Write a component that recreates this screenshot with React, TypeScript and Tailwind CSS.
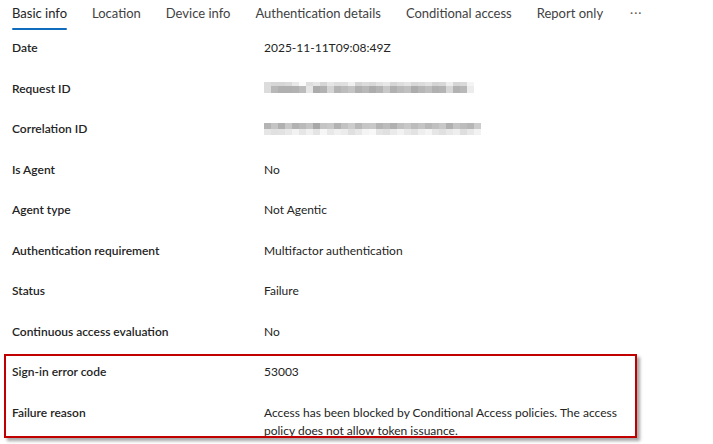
import React from "react";

const reqTop = ["bg-[#dcdcdc]","bg-[#d6d6d6]","bg-[#d6d6d6]","bg-[#dadada]","bg-[#e8e8e8]","bg-[#fbfbfb]","bg-[#dedede]","bg-[#e6e6e6]","bg-[#d6d6d6]","bg-[#e6e6e6]","bg-[#dedede]","bg-[#e0e0e0]","bg-[#f0f0f0]","bg-[#d4d4d4]","bg-[#dcdcdc]","bg-[#d8d8d8]","bg-[#e2e2e2]","bg-[#e8e8e8]","bg-[#d6d6d6]","bg-[#dedede]","bg-[#e4e4e4]","bg-[#d8d8d8]","bg-[#dcdcdc]","bg-[#e2e2e2]","bg-[#d4d4d4]","bg-[#d8d8d8]","bg-[#eeeeee]","bg-[#d6d6d6]","bg-[#dadada]","bg-[#f4f4f4]"];
const reqBot = ["bg-[#dcdcdc]","bg-[#b8b8b8]","bg-[#b0b0b0]","bg-[#b0b0b0]","bg-[#b2b2b2]","bg-[#bcbcbc]","bg-[#e6e6e6]","bg-[#acacac]","bg-[#b2b2b2]","bg-[#d4d4d4]","bg-[#b4b4b4]","bg-[#bcbcbc]","bg-[#c4c4c4]","bg-[#b0b0b0]","bg-[#b8b8b8]","bg-[#acacac]","bg-[#b4b4b4]","bg-[#c8c8c8]","bg-[#b0b0b0]","bg-[#bababa]","bg-[#c0c0c0]","bg-[#acacac]","bg-[#b6b6b6]","bg-[#bebebe]","bg-[#b0b0b0]","bg-[#b4b4b4]","bg-[#d6d6d6]","bg-[#b2b2b2]","bg-[#b8b8b8]","bg-[#ececec]"];
const corTop = ["bg-[#b4b4b4]","bg-[#c4c4c4]","bg-[#b0b0b0]","bg-[#c8c8c8]","bg-[#b2b2b2]","bg-[#bababa]","bg-[#c4c4c4]","bg-[#a8a8a8]","bg-[#c4c4c4]","bg-[#c8c8c8]","bg-[#b2b2b2]","bg-[#c2c2c2]","bg-[#cccccc]","bg-[#b8b8b8]","bg-[#c6c6c6]","bg-[#c8c8c8]","bg-[#b4b4b4]","bg-[#bcbcbc]","bg-[#b0b0b0]","bg-[#c0c0c0]","bg-[#c8c8c8]","bg-[#bcbcbc]","bg-[#c4c4c4]","bg-[#b8b8b8]","bg-[#c0c0c0]","bg-[#c8c8c8]","bg-[#b0b0b0]","bg-[#c4c4c4]","bg-[#bcbcbc]","bg-[#b6b6b6]","bg-[#cccccc]"];
const corBot = ["bg-[#e6e6e6]","bg-[#e0e0e0]","bg-[#e2e2e2]","bg-[#e8e8e8]","bg-[#f2f2f2]","bg-[#e6e6e6]","bg-[#f0f0f0]","bg-[#e4e4e4]","bg-[#f6f6f6]","bg-[#e8e8e8]","bg-[#f0f0f0]","bg-[#ececec]","bg-[#e0e0e0]","bg-[#e8e8e8]","bg-[#f4f4f4]","bg-[#f8f8f8]","bg-[#e4e4e4]","bg-[#e0e0e0]","bg-[#eaeaea]","bg-[#f2f2f2]","bg-[#e8e8e8]","bg-[#e2e2e2]","bg-[#eeeeee]","bg-[#f4f4f4]","bg-[#e6e6e6]","bg-[#e0e0e0]","bg-[#e8e8e8]","bg-[#eeeeee]","bg-[#dedede]","bg-[#e8e8e8]","bg-[#f2f2f2]"];

function Blur({ top, bot, topH, botH, mt }: { top: string[]; bot: string[]; topH: string; botH: string; mt: string }) {
  return (
    <div className={`flex flex-col ${mt}`}>
      <div className="flex">
        {top.map((c, i) => (
          <div key={i} className={`w-[7px] ${topH} ${c}`} />
        ))}
      </div>
      <div className="flex">
        {bot.map((c, i) => (
          <div key={i} className={`w-[7px] ${botH} ${c}`} />
        ))}
      </div>
    </div>
  );
}

const tabs = ["Basic info", "Location", "Device info", "Authentication details", "Conditional access", "Report only"];

type Row = { label: string; value: React.ReactNode };

const rows: Row[] = [
  { label: "Date", value: "2025-11-11T09:08:49Z" },
  { label: "Request ID", value: <Blur top={reqTop} bot={reqBot} topH="h-[4px]" botH="h-[7px]" mt="mt-[2px]" /> },
  { label: "Correlation ID", value: <Blur top={corTop} bot={corBot} topH="h-[6px]" botH="h-[6px]" mt="mt-[3px]" /> },
  { label: "Is Agent", value: "No" },
  { label: "Agent type", value: "Not Agentic" },
  { label: "Authentication requirement", value: "Multifactor authentication" },
  { label: "Status", value: "Failure" },
  { label: "Continuous access evaluation", value: "No" },
  { label: "Sign-in error code", value: "53003" },
  {
    label: "Failure reason",
    value: "Access has been blocked by Conditional Access policies. The access policy does not allow token issuance.",
  },
];

export default function App() {
  return (
    <div className="relative w-[713px] h-[444px] overflow-hidden bg-white text-[#242424] font-['Lato','Liberation_Sans',sans-serif]">
      <div className="flex h-[30px] items-start pl-3 gap-[25px] text-[13px] text-[#424242]">
        {tabs.map((t, i) => (
          <div key={t} className="relative flex h-[30px] flex-col">
            <span className={`leading-[26px] ${i === 0 ? "text-[#242424]" : ""}`}>{t}</span>
            {i === 0 && <div className="absolute bottom-[0px] left-0 right-0 h-[2px] rounded-sm bg-[#0f6cbd]" />}
          </div>
        ))}
        <span className="leading-[26px] text-[#616161] text-[12px] tracking-[1px] pl-[2px]">···</span>
      </div>
      <div className="flex flex-col">
        {rows.map((r) => (
          <div key={r.label} className="flex h-[40.5px] pt-[9px] text-[12px] leading-[18px]">
            <div className="w-[264px] shrink-0 pl-3 font-semibold text-[#242424]">{r.label}</div>
            <div className="w-[362px] text-[#242424]">{r.value}</div>
          </div>
        ))}
      </div>
      <div className="absolute left-[4px] top-[354px] w-[633px] h-[84px] border-2 border-[#c00000] shadow-[3px_3px_3px_rgba(0,0,0,0.35)]" />
    </div>
  );
}
